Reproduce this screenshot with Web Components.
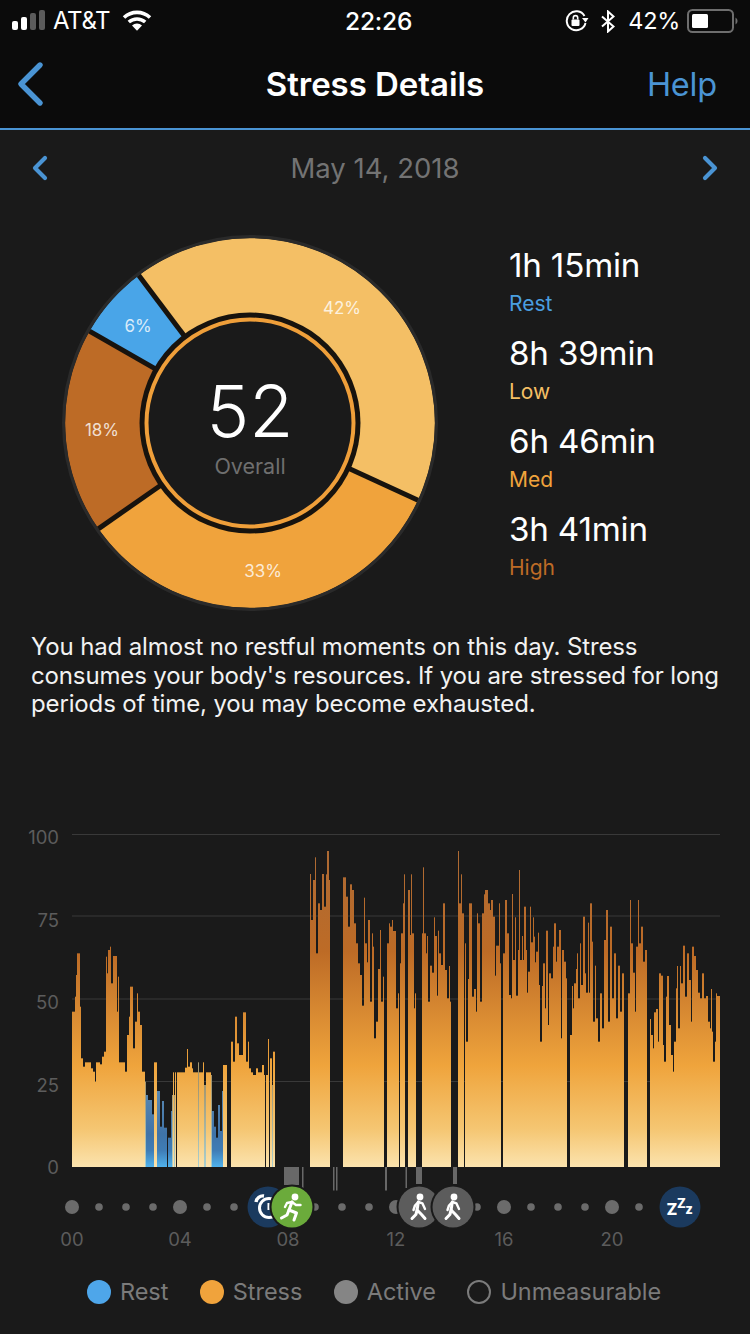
<!DOCTYPE html>
<html>
<head>
<meta charset="utf-8">
<title>Stress Details</title>
<style>
    html, body { margin: 0; padding: 0; background: #1a1a1a; }
    body { width: 750px; height: 1334px; overflow: hidden; font-family: Inter, "Liberation Sans", sans-serif; }
</style>
</head>
<body>
<stress-screen>
    <status-bar></status-bar>
    <nav-bar title="Stress Details" action="Help"></nav-bar>
    <date-row>May 14, 2018</date-row>
    <summary-row>
        <stress-donut slot="chart" score="52"></stress-donut>
        <stress-stat slot="stats" label="Rest" color="#4a9fe0">1h 15min</stress-stat>
        <stress-stat slot="stats" label="Low" color="#f4bf65">8h 39min</stress-stat>
        <stress-stat slot="stats" label="Med" color="#f0a33c">6h 46min</stress-stat>
        <stress-stat slot="stats" label="High" color="#bd6b26">3h 41min</stress-stat>
    </summary-row>
    <advice-text>You had almost no restful moments on this day. Stress consumes your body's resources. If you are stressed for long periods of time, you may become exhausted.</advice-text>
    <stress-chart></stress-chart>
    <chart-legend></chart-legend>
</stress-screen>

<script>
const BLUE = '#4a94d4';

class StressScreen extends HTMLElement {
    constructor() {
        super();
        this.attachShadow({ mode: 'open' }).innerHTML = `
            <style>
                :host { display: flex; flex-direction: column; width: 750px; height: 1334px; background: #1a1a1a; }
            </style>
            <slot></slot>`;
    }
}

class StatusBar extends HTMLElement {
    constructor() {
        super();
        this.attachShadow({ mode: 'open' }).innerHTML = `
            <style>
                :host { display: grid; grid-template-columns: 345px 67px 1fr; height: 40px; background: #0b0b0b; color: #fff;
                        font: 400 24px/42px Inter, "Liberation Sans", sans-serif; }
                .left, .right { display: flex; align-items: center; }
                .left { padding-left: 12px; }
                .carrier { margin-left: 8px; width: 60px; font-size: 24px; letter-spacing: -.4px; white-space: nowrap; }
                .time { font-weight: 500; font-size: 24.5px; letter-spacing: -.2px; text-align: center; white-space: nowrap; }
                .right { justify-content: flex-end; padding-right: 11px; }
                .pct { font-size: 23.5px; letter-spacing: -.3px; margin: 0 7px 0 12px; white-space: nowrap; }
                svg { display: block; flex: none; }
            </style>
            <div class="left">
                <svg width="33" height="22" viewBox="0 0 33 22">
                    <rect x="0" y="11" width="6" height="9" rx="2" fill="#fff"/>
                    <rect x="9" y="7" width="6" height="13" rx="2" fill="#fff"/>
                    <rect x="18" y="3" width="6" height="17" rx="2" fill="#5c5c5c"/>
                    <rect x="27" y="0" width="6" height="20" rx="2" fill="#5c5c5c"/>
                </svg>
                <span class="carrier">AT&amp;T</span>
                <svg width="30" height="22" viewBox="0 0 30 22" style="margin-left:9px">
                    <g fill="none" stroke="#fff" stroke-width="3.6">
                        <path d="M2 7.5 A19 19 0 0 1 28 7.5"/>
                        <path d="M6.8 12 A12.5 12.5 0 0 1 23.2 12"/>
                    </g>
                    <path d="M10 15.4 A7.2 7.2 0 0 1 20 15.4 L15 20.8 Z" fill="#fff"/>
                </svg>
            </div>
            <div class="time">22:26</div>
            <div class="right">
                <svg width="24" height="22" viewBox="0 0 24 22">
                    <path d="M19.5 6 A9.5 9.5 0 1 0 20.5 13" fill="none" stroke="#fff" stroke-width="2"/>
                    <path d="M17 8 L23.5 8 L20.5 12.5 Z" fill="#fff"/>
                    <rect x="6.5" y="9.5" width="8" height="6.5" rx="1" fill="#fff"/>
                    <path d="M8.3 9.5 V7.8 A2.2 2.2 0 0 1 12.7 7.8 V9.5" fill="none" stroke="#fff" stroke-width="1.6"/>
                </svg>
                <svg width="16" height="23" viewBox="0 0 16 23" style="margin-left:11px">
                    <path d="M2 6.5 L13.5 16.5 L8 21.5 V1.5 L13.5 6.5 L2 16.5" fill="none" stroke="#fff" stroke-width="2"/>
                </svg>
                <span class="pct">42%</span>
                <svg width="52" height="24" viewBox="0 0 52 24">
                    <rect x="1" y="1" width="45" height="22" rx="4.5" fill="none" stroke="#6e6e6e" stroke-width="2"/>
                    <rect x="5" y="5" width="16" height="14" rx="1.5" fill="#fff"/>
                    <path d="M48.5 8.5 A4 4 0 0 1 48.5 15.5 Z" fill="#6e6e6e"/>
                </svg>
            </div>`;
    }
}

class NavBar extends HTMLElement {
    constructor() {
        super();
        this.attachShadow({ mode: 'open' }).innerHTML = `
            <style>
                :host { display: grid; grid-template-columns: 120px 1fr 120px; align-items: center; box-sizing: content-box; height: 88px;
                        background: #0b0b0b; border-bottom: 2px solid ${BLUE}; font-family: Inter, "Liberation Sans", sans-serif; }
                svg { display: block; margin-left: 16px; }
                .title { color: #fff; font-size: 33px; font-weight: 600; text-align: center; letter-spacing: -.05px; }
                .action { color: ${BLUE}; font-size: 32.5px; text-align: right; padding-right: 33px; letter-spacing: -.2px; }
            </style>
            <svg width="30" height="46" viewBox="0 0 30 46"><path d="M24 4 L5 23 L24 42" fill="none" stroke="${BLUE}" stroke-width="5.4" stroke-linecap="round" stroke-linejoin="round"/></svg>
            <div class="title">${this.getAttribute('title')}</div>
            <div class="action">${this.getAttribute('action')}</div>`;
    }
}

class DateRow extends HTMLElement {
    constructor() {
        super();
        this.attachShadow({ mode: 'open' }).innerHTML = `
            <style>
                :host { display: flex; align-items: center; justify-content: space-between; height: 76px; padding: 0 31px;
                        color: #737373; font: 400 27.5px Inter, "Liberation Sans", sans-serif; letter-spacing: 0; }
                svg { display: block; }
            </style>
            <svg width="18" height="26" viewBox="0 0 18 26"><path d="M14 3 L4 13 L14 23" fill="none" stroke="${BLUE}" stroke-width="4.2" stroke-linejoin="round" stroke-linecap="round"/></svg>
            <slot></slot>
            <svg width="18" height="26" viewBox="0 0 18 26"><path d="M4 3 L14 13 L4 23" fill="none" stroke="${BLUE}" stroke-width="4.2" stroke-linejoin="round" stroke-linecap="round"/></svg>`;
    }
}

class SummaryRow extends HTMLElement {
    constructor() {
        super();
        this.attachShadow({ mode: 'open' }).innerHTML = `
            <style>
                :host { display: flex; height: 376px; margin-top: 29px; padding-left: 62px; }
                .stats { display: flex; flex-direction: column; margin-left: 71px; padding-top: 8px; }
            </style>
            <slot name="chart"></slot>
            <div class="stats"><slot name="stats"></slot></div>`;
    }
}

class StressDonut extends HTMLElement {
    constructor() {
        super();
        const c = 188;
        const pt = (deg, r) => {
            const a = (deg - 90) * Math.PI / 180;
            return [(c + r * Math.cos(a)).toFixed(2), (c + r * Math.sin(a)).toFixed(2)];
        };
        const wedge = (from, to, fill) => {
            const [x1, y1] = pt(from, 185);
            const [x2, y2] = pt(to, 185);
            const large = to - from > 180 ? 1 : 0;
            return `<path d="M${c} ${c} L${x1} ${y1} A185 185 0 ${large} 1 ${x2} ${y2} Z" fill="${fill}"/>`;
        };
        const sep = deg => {
            const [x1, y1] = pt(deg, 100);
            const [x2, y2] = pt(deg, 185);
            return `<line x1="${x1}" y1="${y1}" x2="${x2}" y2="${y2}" stroke="#17130e" stroke-width="5"/>`;
        };
        const angles = [-37, 114.7, 235.1, 299.8, 323];
        const fills = ['#f4bf65', '#f0a33c', '#bd6b26', '#49a5e8'];
        const wedges = fills.map((f, i) => wedge(angles[i], angles[i + 1], f)).join('');
        const seps = angles.slice(0, 4).map(sep).join('');
        this.attachShadow({ mode: 'open' }).innerHTML = `
            <style>
                :host { display: block; width: 376px; height: 376px; }
                svg { display: block; font-family: Inter, "Liberation Sans", sans-serif; }
                .pct { font-size: 17px; fill: #fff; fill-opacity: .8; text-anchor: middle; }
            </style>
            <svg width="376" height="376" viewBox="0 0 376 376">
                ${wedges}
                ${seps}
                <circle cx="${c}" cy="${c}" r="186.4" fill="none" stroke="#2a2a2a" stroke-width="3.2"/>
                <circle cx="${c}" cy="${c}" r="110.5" fill="#17130e"/>
                <circle cx="${c}" cy="${c}" r="103.5" fill="#1a1a1a" stroke="#ef9f3a" stroke-width="4"/>
                <text class="pct" x="280" y="79">42%</text>
                <text class="pct" x="76" y="97">6%</text>
                <text class="pct" x="40" y="201">18%</text>
                <text class="pct" x="201" y="342">33%</text>
                <text x="188" y="202" font-size="72" font-weight="300" fill="#fff" text-anchor="middle">${this.getAttribute('score')}</text>
                <text x="188" y="239" font-size="21.5" fill="#6f6f6f" text-anchor="middle">Overall</text>
            </svg>`;
    }
}

class StressStat extends HTMLElement {
    constructor() {
        super();
        this.attachShadow({ mode: 'open' }).innerHTML = `
            <style>
                :host { display: block; height: 88px; font-family: Inter, "Liberation Sans", sans-serif; white-space: nowrap; }
                .value { color: #fff; font-size: 33.2px; line-height: 44px; letter-spacing: -.2px; }
                .label { font-size: 21px; line-height: 32px; margin-top: 1px; }
            </style>
            <div class="value"><slot></slot></div>
            <div class="label" style="color:${this.getAttribute('color')}">${this.getAttribute('label')}</div>`;
    }
}

class AdviceText extends HTMLElement {
    constructor() {
        super();
        this.attachShadow({ mode: 'open' }).innerHTML = `
            <style>
                :host { display: block; margin-top: 22px; padding: 0 24px 0 31px; color: #f2f2f2;
                        font: 400 24px/28.5px Inter, "Liberation Sans", sans-serif; letter-spacing: -.14px; }
            </style>
            <slot></slot>`;
    }
}

// bar tops read off the reference: "endX:topY", in 1/3 px from x=20, y=825. 0 is a gap, b is rest, m is a mixed sample
const BARS = `165:560 168:515 171:450 180:385 183:545 189:700 195:725 213:712 219:730 225:740 228:770 240:712 246:718 252:695 258:680
262:395 265:445 271:375 274:365 280:475 291:393 295:560 298:455 316:712 322:740 328:630 331:575 340:485 344:670 350:590 355:505 360:560 366:600 375:740
378:770m 385:810b 396:825b 402:868b 411:712 420:798b 426:905b 432:828b 441:908b 444:0 453:938b 456:858b 459:810m 462:742 465:810m 468:742 471:0
495:742 501:728 504:672 510:725 516:712 520:730 534:742 537:712m 549:742 552:712 558:780m 573:742 576:750m 582:858b 588:905b 594:938b 600:840b 606:918b 609:798b
621:720 633:0 639:650 645:710 651:575 657:655 669:690 678:562 684:710 687:650 693:730 699:742 708:750 714:730 726:742 732:720 735:750 738:0 744:750 747:642 750:0 756:700 759:780m 765:680
870:0 873:147 879:285 885:165 888:97 894:385 900:235 906:255 912:147 918:245 921:148 927:78 930:165 969:0
978:157 984:215 990:305 996:178 1002:195 1008:295 1014:355 1020:415 1026:450 1032:542 1035:218 1041:355 1044:412 1050:285
1056:530 1059:325 1062:365 1068:640 1074:590 1080:432 1083:315 1089:530 1092:455 1101:0 1107:355 1110:295 1116:305 1119:285 1128:318 1134:550 1137:505 1140:0
1143:415 1149:325 1152:235 1155:148 1164:0 1170:195 1173:330 1176:148 1182:325 1185:550 1188:505 1206:0
1209:325 1212:127 1218:325 1221:385 1224:333 1230:530 1236:422 1242:443 1245:277 1251:333 1254:512 1257:317 1263:385 1269:420 1275:235 1281:435 1287:520 1290:423 1293:530 1314:0
1317:78 1323:235 1326:148 1332:265 1335:0 1338:355 1344:650 1347:462 1356:235 1362:515 1368:492 1371:560 1374:265 1380:295 1386:530 1392:265 1395:208 1404:195 1410:235 1413:255 1419:225 1425:275 1428:452 1437:362 1440:235 1443:415 1449:0
1455:385 1461:225 1467:325 1473:510 1476:520 1479:207 1485:405 1488:277 1494:512 1497:375 1500:135 1506:405 1509:333 1512:405 1518:245 1521:375 1524:503 1530:440 1533:245 1539:352 1542:277 1545:335 1548:412 1554:380 1557:323 1560:480 1566:650 1569:483 1575:415 1578:550 1584:317 1587:600 1593:445 1599:460 1602:365 1608:295 1611:410 1617:365 1623:315 1626:640 1632:375 1638:410 1641:460 1650:0
1656:630 1659:483 1662:550 1668:475 1671:432 1674:385 1680:520 1683:355 1689:480 1695:275 1698:445 1704:503 1707:293 1710:503 1716:235 1719:350 1725:590 1728:422 1734:580 1740:650 1746:505 1752:610 1758:345 1764:255 1770:590 1776:305 1782:520 1788:385 1794:580 1800:422 1806:560 1812:445 1824:0
1830:505 1833:225 1839:355 1845:443 1848:560 1854:365 1857:225 1863:355 1869:305 1875:410 1881:375 1890:0
1893:582 1899:630 1902:670 1908:562 1914:552 1917:650 1923:445 1929:452 1932:660 1938:710 1941:515 1947:453 1953:600 1959:690 1962:740 1968:650 1971:490 1974:423 1980:610 1983:423 1989:475 1995:362 2001:515 2007:385 2013:465 2016:590 2022:365 2028:393 2034:435 2040:503 2046:520 2052:445 2058:520 2064:513 2070:590 2073:610 2076:492 2079:620 2085:710 2088:650 2091:505 2100:513`;

class StressChart extends HTMLElement {
    constructor() {
        super();
        const top0 = 820; // page y of the top of the svg
        const base = 1167 - top0;
        const fills = { '': 'url(#stress)', b: 'url(#rest)', m: 'url(#mixed)' };

        let bars = '';
        let from = 156;
        BARS.trim().split(/\s+/).forEach(tok => {
            const m = tok.match(/^(\d+):(\d+)([bm]?)$/);
            const end = +m[1];
            const zy = +m[2];
            if (zy > 0) {
                // whole pixels, otherwise neighbouring bars show seams
                const x = Math.round(20 + from / 3);
                const w = Math.round(20 + end / 3) - x;
                const y = 825 + zy / 3 - top0;
                bars += `<rect x="${x}" y="${y.toFixed(2)}" width="${w}" height="${(base - y).toFixed(2)}" fill="${fills[m[3]]}"/>`;
            }
            from = end;
        });

        const grid = [[100, 834.5], [75, 916], [50, 999], [25, 1081.5]].map(([, y]) =>
            `<line x1="72" x2="720" y1="${y - top0}" y2="${y - top0}" stroke="#393939" stroke-width="1.2"/>`).join('');
        const yLabels = [[100, 844], [75, 927], [50, 1009], [25, 1092], [0, 1174]].map(([v, y]) =>
            `<text x="59" y="${y - top0}" text-anchor="end" class="axis">${v}</text>`).join('');

        const ticks = [[284, 15, 18], [302, 1.5, 21], [333, 1.5, 23.5], [336, 1.5, 23.5], [385, 2, 23.5], [405.5, 1.5, 21], [416, 6, 17], [453, 4, 17]]
            .map(([x, w, h]) => `<rect x="${x}" y="${base}" width="${w}" height="${h}" fill="#686868"/>`).join('');

        const dotY = 1207 - top0;
        let dots = '';
        let xLabels = '';
        for (let i = 0; i < 23; i++) {
            const x = 72 + i * 27;
            const hour = i % 4 === 0;
            dots += `<circle cx="${x}" cy="${dotY}" r="${hour ? 7 : 3.8}" fill="#6b6b6b"/>`;
            if (hour) xLabels += `<text x="${x}" y="${1246 - top0}" text-anchor="middle" class="axis">${String(i).padStart(2, '0')}</text>`;
        }

        this.attachShadow({ mode: 'open' }).innerHTML = `
            <style>
                :host { display: block; flex: none; margin-top: 101px; height: 440px; }
                svg { display: block; font-family: Inter, "Liberation Sans", sans-serif; }
                .axis { font-size: 18.5px; fill: #5c5c5c; }
                .person { fill: none; stroke: #fff; stroke-width: 3; stroke-linecap: round; stroke-linejoin: round; }
            </style>
            <svg width="750" height="440" viewBox="0 0 750 440">
                <defs>
                    <linearGradient id="stress" gradientUnits="userSpaceOnUse" x1="0" x2="0" y1="${850 - top0}" y2="${base}">
                        <stop offset="0" stop-color="#ad6a34"/>
                        <stop offset=".32" stop-color="#bd6b26"/>
                        <stop offset=".68" stop-color="#efa43c"/>
                        <stop offset=".88" stop-color="#f5c672"/>
                        <stop offset="1" stop-color="#fbe3ae"/>
                    </linearGradient>
                    <linearGradient id="rest" gradientUnits="userSpaceOnUse" x1="0" x2="0" y1="${1085 - top0}" y2="${base}">
                        <stop offset="0" stop-color="#5d8bb3"/>
                        <stop offset=".6" stop-color="#3f73a8"/>
                        <stop offset=".8" stop-color="#3f7db6"/>
                        <stop offset="1" stop-color="#50b2ec"/>
                    </linearGradient>
                    <linearGradient id="mixed" gradientUnits="userSpaceOnUse" x1="0" x2="0" y1="${1085 - top0}" y2="${base}">
                        <stop offset="0" stop-color="#a3966f"/>
                        <stop offset="1" stop-color="#a8cfd0"/>
                    </linearGradient>
                    <g id="walker">
                        <circle cx="0.5" cy="-10" r="3.4" fill="#fff"/>
                        <path class="person" d="M-1.2 -5 L-2.4 3 L2 7.5 L5.5 11.5"/>
                        <path class="person" d="M-2.4 3 L-3.6 7.5 L-7.5 11.5"/>
                        <path class="person" d="M-1.2 -5 L3 -3.6 L5.5 2" style="stroke-width:2.4"/>
                        <path class="person" d="M-1.2 -5 L-4.5 -1.5 L-6 3" style="stroke-width:2.4"/>
                    </g>
                </defs>
                ${grid}
                ${yLabels}
                ${bars}
                ${ticks}
                ${dots}
                ${xLabels}

                <circle cx="268" cy="${dotY}" r="20.5" fill="#1b3a5e"/>
                <circle cx="269" cy="${dotY + 1}" r="9.5" fill="none" stroke="#fff" stroke-width="3"/>
                <path d="M256 ${dotY - 5} A7 7 0 0 1 264 ${dotY - 11}" fill="none" stroke="#fff" stroke-width="3.4"/>
                <path d="M268.5 ${dotY - 4} V${dotY + 3}" stroke="#fff" stroke-width="2"/>

                <circle cx="292" cy="${dotY}" r="22.5" fill="#1a1a1a"/>
                <circle cx="292" cy="${dotY}" r="20.5" fill="#6bab3b"/>
                <circle cx="295" cy="${dotY - 10}" r="3.4" fill="#fff"/>
                <path class="person" d="M292 ${dotY - 5} L289 ${dotY + 3} L296.5 ${dotY + 6} L294 ${dotY + 13}"/>
                <path class="person" d="M289 ${dotY + 3} L287 ${dotY + 8} L281.5 ${dotY + 11}"/>
                <path class="person" d="M292 ${dotY - 5} L296 ${dotY - 2} L300.5 ${dotY - 2}" style="stroke-width:2.4"/>
                <path class="person" d="M292 ${dotY - 5} L287 ${dotY - 4} L285 ${dotY}" style="stroke-width:2.4"/>

                <circle cx="419" cy="${dotY}" r="22.5" fill="#1a1a1a"/>
                <circle cx="419" cy="${dotY}" r="20.5" fill="#5c5c5c"/>
                <use href="#walker" x="419.5" y="${dotY}"/>
                <circle cx="453" cy="${dotY}" r="22.5" fill="#1a1a1a"/>
                <circle cx="453" cy="${dotY}" r="20.5" fill="#5c5c5c"/>
                <use href="#walker" x="453.5" y="${dotY}"/>

                <circle cx="680" cy="${dotY}" r="20.5" fill="#1b3a5e"/>
                <g fill="#fff" font-weight="800" text-anchor="middle">
                    <text x="672" y="${dotY + 8}" font-size="16">Z</text>
                    <text x="681.5" y="${dotY + 1}" font-size="13">Z</text>
                    <text x="689" y="${dotY + 7}" font-size="13">z</text>
                </g>
            </svg>`;
    }
}

class ChartLegend extends HTMLElement {
    constructor() {
        super();
        const items = [
            ['Rest', 'background:#4ea6ea'],
            ['Stress', 'background:#f0a33c'],
            ['Active', 'background:#858585'],
            ['Unmeasurable', 'border:2px solid #7b7b7b'],
        ];
        this.attachShadow({ mode: 'open' }).innerHTML = `
            <style>
                :host { display: flex; justify-content: center; gap: 31.5px; height: 40px; align-items: center; margin-top: 12px; padding-right: 2px;
                        color: #7b7b7b; font: 400 23.5px Inter, "Liberation Sans", sans-serif; letter-spacing: -.05px; }
                .item { display: flex; align-items: center; gap: 9px; white-space: nowrap; }
                .dot { width: 24px; height: 24px; border-radius: 50%; box-sizing: border-box; }
            </style>
            ${items.map(([t, s]) => `<div class="item"><span class="dot" style="${s}"></span>${t}</div>`).join('')}`;
    }
}

customElements.define('stress-screen', StressScreen);
customElements.define('status-bar', StatusBar);
customElements.define('nav-bar', NavBar);
customElements.define('date-row', DateRow);
customElements.define('summary-row', SummaryRow);
customElements.define('stress-donut', StressDonut);
customElements.define('stress-stat', StressStat);
customElements.define('advice-text', AdviceText);
customElements.define('stress-chart', StressChart);
customElements.define('chart-legend', ChartLegend);
</script>
</body>
</html>
